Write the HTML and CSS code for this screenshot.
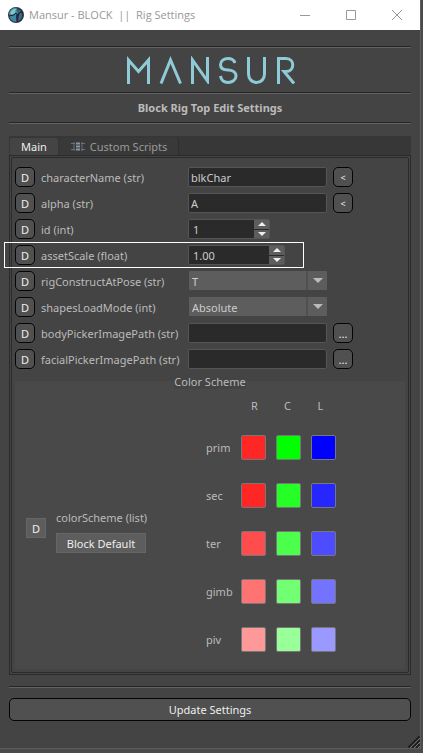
FILE: index.html
```html
<!DOCTYPE html>
<html lang="en">
<head>
<meta charset="utf-8">
<meta name="viewport" content="width=device-width, initial-scale=1">
<title>Mansur - BLOCK || Rig Settings</title>
<link rel="stylesheet" href="styles.css">
</head>
<body>
<div class="window">
  <header class="titlebar">
    <svg class="app-icon" viewBox="0 0 16 16" aria-hidden="true">
      <circle cx="8" cy="8" r="8" fill="#33304d"/>
      <path d="M1 6C2 2 6 0 9 1L10 6L8 9L9 15C4 15 1 12 1 6Z" fill="#3a8a99"/>
      <path d="M2 6C3 3 6 1 8 2L7 6L4 8Z" fill="#7cc6cc"/>
      <path d="M10 2C14 4 15 8 13 12L10 14L11 9Z" fill="#2e7180"/>
      <path d="M1 9L6 8L8 6L10 9L12 5L15 6M9 8L9 15" fill="none" stroke="#2b1730"/>
    </svg>
    <h1 class="window-title">Mansur - BLOCK&nbsp; ||&nbsp; Rig Settings</h1>
    <div class="window-controls">
      <button type="button" aria-label="Minimize"><svg viewBox="0 0 12 12"><path d="M1 6.500H11"/></svg></button>
      <button type="button" aria-label="Maximize"><svg viewBox="0 0 12 12"><path d="M1.500 1.500H10.500V10.500H1.500Z"/></svg></button>
      <button type="button" aria-label="Close"><svg viewBox="0 0 12 12"><path d="M1 1L11 11M11 1L1 11"/></svg></button>
    </div>
  </header>

  <main class="content">
    <hr class="rule">
    <div class="brand">
      <svg class="logo" viewBox="0 0 170 28" role="img" aria-label="Mansur">
        <path d="M3.500 28V4L13.500 15.500L23.500 4V28M36 27.500L45.500 4L55.500 27.500M67.500 28V4L82.500 25V1M110 7C109 4 106 2.500 103 2.500C99 2.500 95.500 5 95.500 8.500C95.500 12.500 99 14 103 14C107 14 111 16 111 20C111 24 107 26.500 103 26.500C99 26.500 96 24 95.500 20M123.500 1V18C123.500 23 127 26.500 131.500 26.500C136 26.500 139.500 23 139.500 18V1M153.500 28V2.500H161C170 2.500 170 15.500 161 15.500H159L169 27.500"/>
      </svg>
    </div>
    <hr class="rule">
    <h2 class="subtitle">Block Rig Top Edit Settings</h2>
    <hr class="rule">

    <div class="tabs" role="tablist">
      <button class="tab tab-active" type="button" role="tab" aria-selected="true">Main</button>
      <button class="tab" type="button" role="tab" aria-selected="false">
        <svg class="tab-icon" viewBox="0 0 14 10" aria-hidden="true"><path d="M5 1.500H9M5 4.500H9M5 7.500H9" stroke="#8796a5" stroke-width="2"/><path d="M3 0V9M11 0V9" stroke="#4b545d" stroke-width="2"/><path d="M0 1.500H4M0 7.500H4M10 1.500H14M10 7.500H14" stroke="#66737f"/></svg>
        Custom Scripts
      </button>
    </div>

    <section class="panel">
      <div class="panel-inner">
        <form class="fields">
          <div class="field">
            <button class="key" type="button">D</button>
            <label class="name" for="character">characterName (str)</label>
            <input class="text" id="character" type="text" value="blkChar">
            <button class="key" type="button"><span class="small">&lt;</span></button>
          </div>
          <div class="field">
            <button class="key" type="button">D</button>
            <label class="name" for="alpha">alpha (str)</label>
            <input class="text" id="alpha" type="text" value="A">
            <button class="key" type="button"><span class="small">&lt;</span></button>
          </div>
          <div class="field">
            <button class="key" type="button">D</button>
            <label class="name" for="rig-id">id (int)</label>
            <div class="spin">
              <input class="spin-value" id="rig-id" type="text" inputmode="numeric" value="1">
              <div class="steps">
                <button type="button" aria-label="Increase id"><svg viewBox="0 0 8 4"><path d="M0 4L4 0L8 4Z"/></svg></button>
                <button type="button" aria-label="Decrease id"><svg viewBox="0 0 8 4"><path d="M0 0L4 4L8 0Z"/></svg></button>
              </div>
            </div>
          </div>
          <div class="field highlighted">
            <button class="key" type="button">D</button>
            <label class="name" for="scale">assetScale (float)</label>
            <div class="spin spin-wide">
              <input class="spin-value" id="scale" type="text" inputmode="decimal" value="1.00">
              <div class="steps">
                <button type="button" aria-label="Increase scale"><svg viewBox="0 0 8 4"><path d="M0 4L4 0L8 4Z"/></svg></button>
                <button type="button" aria-label="Decrease scale"><svg viewBox="0 0 8 4"><path d="M0 0L4 4L8 0Z"/></svg></button>
              </div>
            </div>
          </div>
          <div class="field">
            <button class="key" type="button">D</button>
            <label class="name" for="pose">rigConstructAtPose (str)</label>
            <div class="combo">
              <select id="pose"><option>T</option></select>
              <span class="combo-arrow"><svg viewBox="0 0 10 5"><path d="M0 0L5 5L10 0Z"/></svg></span>
            </div>
          </div>
          <div class="field">
            <button class="key" type="button">D</button>
            <label class="name" for="mode">shapesLoadMode (int)</label>
            <div class="combo">
              <select id="mode"><option>Absolute</option></select>
              <span class="combo-arrow"><svg viewBox="0 0 10 5"><path d="M0 0L5 5L10 0Z"/></svg></span>
            </div>
          </div>
          <div class="field">
            <button class="key" type="button">D</button>
            <label class="name" for="body-image">bodyPickerImagePath (str)</label>
            <input class="text" id="body-image" type="text">
            <button class="key" type="button">...</button>
          </div>
          <div class="field">
            <button class="key" type="button">D</button>
            <label class="name" for="facial-image">facialPickerImagePath (str)</label>
            <input class="text" id="facial-image" type="text">
            <button class="key" type="button">...</button>
          </div>
        </form>

        <section class="scheme">
          <h3 class="scheme-title"><span>Color Scheme</span></h3>
          <div class="scheme-body">
            <div class="scheme-list">
              <button class="flat flat-key" type="button">D</button>
              <div class="scheme-choice">
                <span>colorScheme (list)</span>
                <button class="flat" type="button">Block Default</button>
              </div>
            </div>
            <div class="palette">
              <div class="palette-head"><span>R</span><span>C</span><span>L</span></div>
              <div class="palette-row"><span>prim</span><button class="swatch prim-r" type="button" aria-label="prim R"></button><button class="swatch prim-c" type="button" aria-label="prim C"></button><button class="swatch prim-l" type="button" aria-label="prim L"></button></div>
              <div class="palette-row"><span>sec</span><button class="swatch sec-r" type="button" aria-label="sec R"></button><button class="swatch sec-c" type="button" aria-label="sec C"></button><button class="swatch sec-l" type="button" aria-label="sec L"></button></div>
              <div class="palette-row"><span>ter</span><button class="swatch ter-r" type="button" aria-label="ter R"></button><button class="swatch ter-c" type="button" aria-label="ter C"></button><button class="swatch ter-l" type="button" aria-label="ter L"></button></div>
              <div class="palette-row"><span>gimb</span><button class="swatch gimb-r" type="button" aria-label="gimb R"></button><button class="swatch gimb-c" type="button" aria-label="gimb C"></button><button class="swatch gimb-l" type="button" aria-label="gimb L"></button></div>
              <div class="palette-row"><span>piv</span><button class="swatch piv-r" type="button" aria-label="piv R"></button><button class="swatch piv-c" type="button" aria-label="piv C"></button><button class="swatch piv-l" type="button" aria-label="piv L"></button></div>
            </div>
          </div>
        </section>
      </div>
    </section>

    <hr class="rule">
    <button class="update" type="button">Update Settings</button>
  </main>
  <svg class="grip" viewBox="0 0 12 12" aria-hidden="true"><path d="M0 12L12 0M4 12L12 4M8 12L12 8" stroke="#202020" stroke-width="2"/><path d="M2 12L12 2M6 12L12 6M10 12L12 10" stroke="#777"/></svg>
</div>
</body>
</html>
```
FILE: styles.css
```css
*, *::after { box-sizing: border-box; }

body {
  margin: 0;
  min-height: 100vh;
  display: flex;
  padding: 0 2px 4px 0;
  background: #4b4b4b;
  color: #bbb;
  font: 11px/16px "Noto Sans", "Open Sans", sans-serif;
}

button, input, select { margin: 0; padding: 0; border: 0; font: inherit; color: #eee; }
button { display: flex; align-items: center; justify-content: center; }
svg { display: block; }

.window {
  position: relative;
  flex: 1;
  min-width: 0;
  background: #444;
  border: solid #5c5c5c;
  border-width: 0 1px 1px 0;
}

.titlebar {
  display: flex;
  align-items: center;
  height: 30px;
  padding-left: 8px;
  gap: 5px;
  background: #fff;
}
.app-icon { width: 16px; height: 16px; }
.window-title {
  flex: 1;
  margin: 0;
  color: #999;
  font: 11px/16px "Open Sans", "Noto Sans", sans-serif;
  white-space: nowrap;
}
.window-controls { display: flex; }
.window-controls button { width: 46px; height: 28px; background: none; }
.window-controls svg { width: 12px; height: 12px; fill: none; stroke: #999; }

.content { padding: 16px 9px 0; }

.rule {
  height: 2px;
  margin: 0;
  border: 0;
  background: linear-gradient(#262626 50%, #626262 50%);
}
.brand { display: flex; justify-content: center; padding: 8px 0; }
.logo {
  width: 170px;
  height: 28px;
  fill: none;
  stroke: #8fcbd6;
  stroke-width: 3;
}
.subtitle {
  margin: 6px 0;
  font-size: 11px;
  line-height: 16px;
  font-weight: 700;
  text-align: center;
}

.tabs { display: flex; margin-top: 12px; padding: 2px 1px 0; background: #373737; }
.tab {
  height: 17px;
  padding: 0 11px;
  gap: 5px;
  border-right: 1px solid #2e2e2e;
  border-radius: 2px 2px 0 0;
  background: #393939;
  color: #999;
}
.tab-active { margin-right: 2px; border: 0; background: #444; color: #eee; }
.tab-icon { width: 14px; height: 10px; }

.panel { padding: 1px; border: 1px solid #2b2b2b; }
.panel-inner { padding: 9px 3px 3px; border: 1px solid #2b2b2b; border-radius: 2px; }

.fields { display: flex; flex-direction: column; gap: 6px; }
.field {
  position: relative;
  display: grid;
  grid-template-columns: 20px 141px 139px 20px;
  column-gap: 6px;
  align-items: center;
  height: 20px;
}
.highlighted::after {
  content: "";
  position: absolute;
  inset: -3px auto -3px -11px;
  width: 300px;
  border: 1px solid #fff;
  pointer-events: none;
}
.name { padding-top: 2px; white-space: nowrap; }
.key {
  width: 20px;
  height: 20px;
  padding-top: 2px;
  border: 1px solid #050505;
  border-radius: 5px;
  background: #505050;
}
.small { font-size: 9px; }
.text, .spin {
  width: 100%;
  height: 20px;
  border: 1px solid #555;
  border-radius: 2px;
  background: #2a2a2a;
  color: #ccc;
}
.text { padding: 0 2px; }
.spin { display: flex; width: 82px; }
.spin-wide { width: 97px; }
.spin-value { flex: 1; min-width: 0; padding: 2px 0 0 4px; background: none; color: #ccc; }
.steps { display: flex; flex-direction: column; gap: 1px; width: 16px; border-left: 1px solid #2a2a2a; }
.steps button { flex: 1; background: #5d5d5d; }
.steps svg { width: 8px; height: 4px; fill: #eee; }
.combo { position: relative; height: 20px; padding-left: 1px; }
.combo select {
  width: 100%;
  height: 19px;
  padding: 2px 0 0 3px;
  appearance: none;
  border-radius: 1px;
  background: #5d5d5d;
  color: #ccc;
}
.combo-arrow {
  position: absolute;
  inset: 0 0 1px auto;
  width: 21px;
  display: flex;
  align-items: center;
  justify-content: center;
  border-left: 2px solid #505050;
  pointer-events: none;
}
.combo-arrow svg { width: 10px; height: 5px; fill: #bbb; }

.scheme { margin-top: 5px; }
.scheme-title {
  margin: 0;
  font: inherit;
  text-align: center;
  background: linear-gradient(transparent 7px, #494949 7px);
}
.scheme-title span { background: #444; }
.scheme-body {
  display: flex;
  align-items: flex-start;
  min-height: 279px;
  padding: 8px 0 0 11px;
  background: #494949;
  border-radius: 0 0 2px 2px;
}
.scheme-list {
  display: flex;
  align-items: center;
  align-self: stretch;
  gap: 10px;
  width: 180px;
  padding-bottom: 12px;
}
.scheme-choice { display: flex; flex-direction: column; gap: 7px; padding-top: 8px; }
.flat {
  height: 20px;
  width: 90px;
  padding-top: 2px;
  border: 1px solid #666;
  background: #5d5d5d;
}
.flat-key { width: 20px; }
.palette { display: flex; flex-direction: column; gap: 23px; }
.palette-head {
  display: grid;
  grid-template-columns: 33px 33px 33px;
  padding-left: 32px;
  margin-bottom: -2px;
  text-align: center;
}
.palette-row {
  display: grid;
  grid-template-columns: 25px 25px 25px 25px;
  gap: 10px;
  align-items: center;
}
.swatch { width: 25px; height: 25px; border: 1px solid #777; border-radius: 2px; }
.prim-r, .sec-r { background: #ff2626; }
.prim-c { background: #0f0; }
.prim-l { background: #00f; }
.sec-c { background: #26ff26; }
.sec-l { background: #2626ff; }
.ter-r { background: #ff4d4d; }
.ter-c { background: #4dff4d; }
.ter-l { background: #4d4dff; }
.gimb-r { background: #ff7373; }
.gimb-c { background: #73ff73; }
.gimb-l { background: #7373ff; }
.piv-r { background: #f99; }
.piv-c { background: #9f9; }
.piv-l { background: #99f; }

.panel + .rule { margin-top: 11px; }
.update {
  width: 100%;
  height: 23px;
  margin-top: 10px;
  border: 1px solid #050505;
  border-radius: 5px;
  background: #505050;
}
.grip { position: absolute; right: 0; bottom: 0; width: 12px; height: 12px; }
```
